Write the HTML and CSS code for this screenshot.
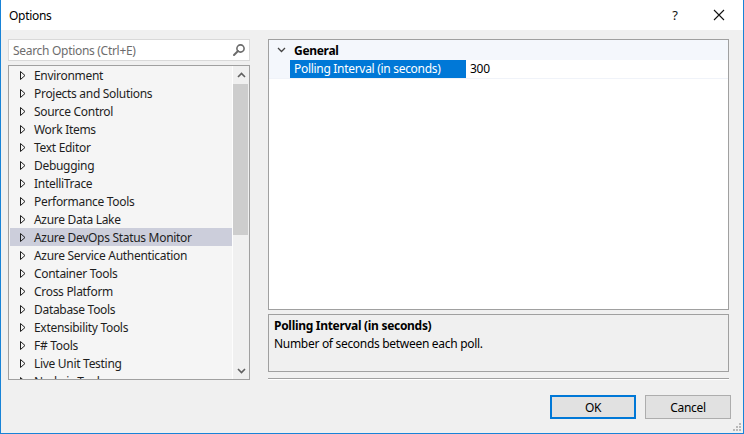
FILE: index.html
```html
<!DOCTYPE html>
<html>
<head>
<meta charset="utf-8">
<link rel="stylesheet" href="styles.css">
</head>
<body>
<div class="window">
  <div class="titlebar">
    <span class="title">Options</span>
    <span class="tb-help">?</span>
    <span class="tb-close">
      <svg width="12" height="12" viewBox="0 0 12 12"><path d="M1 1 L11 11 M11 1 L1 11" stroke="#111" stroke-width="1.1" fill="none"/></svg>
    </span>
  </div>
  <div class="content">
    <div class="panes">
      <div class="left">
        <div class="search">
          <span class="placeholder">Search Options (Ctrl+E)</span>
          <svg class="search-icon" width="14" height="14" viewBox="0 0 14 14"><circle cx="8.5" cy="5.5" r="3.6" stroke="#6b6b6b" stroke-width="1.6" fill="none"/><path d="M6 8 L2 12" stroke="#6b6b6b" stroke-width="2" stroke-linecap="round"/></svg>
        </div>
        <div class="tree">
          <div class="items">
            <div class="item"><svg class="tri" width="6" height="9" viewBox="0 0 6 9"><path d="M0.5 0.5 L5 4.5 L0.5 8.5 Z" stroke="#1e1e1e" fill="none"/></svg><span>Environment</span></div>
            <div class="item"><svg class="tri" width="6" height="9" viewBox="0 0 6 9"><path d="M0.5 0.5 L5 4.5 L0.5 8.5 Z" stroke="#1e1e1e" fill="none"/></svg><span>Projects and Solutions</span></div>
            <div class="item"><svg class="tri" width="6" height="9" viewBox="0 0 6 9"><path d="M0.5 0.5 L5 4.5 L0.5 8.5 Z" stroke="#1e1e1e" fill="none"/></svg><span>Source Control</span></div>
            <div class="item"><svg class="tri" width="6" height="9" viewBox="0 0 6 9"><path d="M0.5 0.5 L5 4.5 L0.5 8.5 Z" stroke="#1e1e1e" fill="none"/></svg><span>Work Items</span></div>
            <div class="item"><svg class="tri" width="6" height="9" viewBox="0 0 6 9"><path d="M0.5 0.5 L5 4.5 L0.5 8.5 Z" stroke="#1e1e1e" fill="none"/></svg><span>Text Editor</span></div>
            <div class="item"><svg class="tri" width="6" height="9" viewBox="0 0 6 9"><path d="M0.5 0.5 L5 4.5 L0.5 8.5 Z" stroke="#1e1e1e" fill="none"/></svg><span>Debugging</span></div>
            <div class="item"><svg class="tri" width="6" height="9" viewBox="0 0 6 9"><path d="M0.5 0.5 L5 4.5 L0.5 8.5 Z" stroke="#1e1e1e" fill="none"/></svg><span>IntelliTrace</span></div>
            <div class="item"><svg class="tri" width="6" height="9" viewBox="0 0 6 9"><path d="M0.5 0.5 L5 4.5 L0.5 8.5 Z" stroke="#1e1e1e" fill="none"/></svg><span>Performance Tools</span></div>
            <div class="item"><svg class="tri" width="6" height="9" viewBox="0 0 6 9"><path d="M0.5 0.5 L5 4.5 L0.5 8.5 Z" stroke="#1e1e1e" fill="none"/></svg><span>Azure Data Lake</span></div>
            <div class="item selected"><svg class="tri" width="6" height="9" viewBox="0 0 6 9"><path d="M0.5 0.5 L5 4.5 L0.5 8.5 Z" stroke="#1e1e1e" fill="none"/></svg><span>Azure DevOps Status Monitor</span></div>
            <div class="item"><svg class="tri" width="6" height="9" viewBox="0 0 6 9"><path d="M0.5 0.5 L5 4.5 L0.5 8.5 Z" stroke="#1e1e1e" fill="none"/></svg><span>Azure Service Authentication</span></div>
            <div class="item"><svg class="tri" width="6" height="9" viewBox="0 0 6 9"><path d="M0.5 0.5 L5 4.5 L0.5 8.5 Z" stroke="#1e1e1e" fill="none"/></svg><span>Container Tools</span></div>
            <div class="item"><svg class="tri" width="6" height="9" viewBox="0 0 6 9"><path d="M0.5 0.5 L5 4.5 L0.5 8.5 Z" stroke="#1e1e1e" fill="none"/></svg><span>Cross Platform</span></div>
            <div class="item"><svg class="tri" width="6" height="9" viewBox="0 0 6 9"><path d="M0.5 0.5 L5 4.5 L0.5 8.5 Z" stroke="#1e1e1e" fill="none"/></svg><span>Database Tools</span></div>
            <div class="item"><svg class="tri" width="6" height="9" viewBox="0 0 6 9"><path d="M0.5 0.5 L5 4.5 L0.5 8.5 Z" stroke="#1e1e1e" fill="none"/></svg><span>Extensibility Tools</span></div>
            <div class="item"><svg class="tri" width="6" height="9" viewBox="0 0 6 9"><path d="M0.5 0.5 L5 4.5 L0.5 8.5 Z" stroke="#1e1e1e" fill="none"/></svg><span>F# Tools</span></div>
            <div class="item"><svg class="tri" width="6" height="9" viewBox="0 0 6 9"><path d="M0.5 0.5 L5 4.5 L0.5 8.5 Z" stroke="#1e1e1e" fill="none"/></svg><span>Live Unit Testing</span></div>
            <div class="item"><svg class="tri" width="6" height="9" viewBox="0 0 6 9"><path d="M0.5 0.5 L5 4.5 L0.5 8.5 Z" stroke="#1e1e1e" fill="none"/></svg><span>Node.js Tools</span></div>
          </div>
          <div class="scrollbar">
            <div class="sb-btn"><svg width="9" height="6" viewBox="0 0 9 6"><path d="M1 5 L4.5 1.5 L8 5" stroke="#606060" stroke-width="1.6" fill="none"/></svg></div>
            <div class="sb-track"><div class="sb-thumb"></div></div>
            <div class="sb-btn"><svg width="9" height="6" viewBox="0 0 9 6"><path d="M1 1 L4.5 4.5 L8 1" stroke="#606060" stroke-width="1.6" fill="none"/></svg></div>
          </div>
        </div>
      </div>
      <div class="right">
        <div class="grid">
          <div class="cat-row">
            <svg class="chev" width="9" height="6" viewBox="0 0 9 6"><path d="M1 1 L4.5 4.5 L8 1" stroke="#444" stroke-width="1.3" fill="none"/></svg>
            <span class="cat-name">General</span>
          </div>
          <div class="prop-row">
            <div class="gutter"></div>
            <div class="prop-label">Polling Interval (in seconds)</div>
            <div class="prop-value">300</div>
          </div>
        </div>
        <div class="desc">
          <div class="desc-title">Polling Interval (in seconds)</div>
          <div class="desc-text">Number of seconds between each poll.</div>
        </div>
        <div class="sep"></div>
      </div>
    </div>
    <div class="footer">
      <button class="btn primary">OK</button>
      <button class="btn">Cancel</button>
    </div>
    <svg class="grip" width="10" height="10" viewBox="0 0 10 10">
      <rect x="7" y="1" width="2" height="2" fill="#b8b8b8"/>
      <rect x="4" y="4" width="2" height="2" fill="#b8b8b8"/>
      <rect x="7" y="4" width="2" height="2" fill="#b8b8b8"/>
      <rect x="1" y="7" width="2" height="2" fill="#b8b8b8"/>
      <rect x="4" y="7" width="2" height="2" fill="#b8b8b8"/>
      <rect x="7" y="7" width="2" height="2" fill="#b8b8b8"/>
    </svg>
  </div>
</div>
</body>
</html>
```

FILE: styles.css
```css
* { box-sizing: border-box; }
html, body { margin: 0; padding: 0; }
body {
  font-family: "Noto Sans", "Liberation Sans", sans-serif;
  font-size: 12px;
  letter-spacing: -0.3px;
  color: #1e1e1e;
  background: #f0f0f0;
}
.window {
  width: 744px;
  height: 434px;
  border: 1px solid #1883d7;
  border-top: none;
  display: flex;
  flex-direction: column;
  overflow: hidden;
}
.titlebar {
  height: 30px;
  background: #fff;
  display: flex;
  align-items: center;
  padding-left: 8px;
  flex: none;
}
.title { flex: 1; font-size: 12px; color: #000; }
.tb-help { width: 20px; font-size: 13px; color: #111; margin-right: 28px; text-align: center; }
.tb-close { width: 12px; height: 12px; margin-right: 18px; display: flex; }
.content {
  flex: 1;
  background: #f0f0f0;
  display: flex;
  flex-direction: column;
  position: relative;
}
.panes {
  display: flex;
  padding: 9px 0 0 7px;
}
.left {
  width: 242px;
  display: flex;
  flex-direction: column;
  gap: 4px;
}
.search {
  height: 22px;
  background: #fff;
  border: 1px solid #d9d9d9;
  display: flex;
  align-items: center;
  padding-left: 4px;
  padding-right: 3px;
}
.placeholder { flex: 1; color: #6d6d6d; }
.search-icon { flex: none; }
.tree {
  height: 315px;
  border: 1px solid #a0a0a0;
  background: #f5f5f5;
  display: flex;
  overflow: hidden;
}
.items {
  flex: 1;
  overflow: hidden;
  padding-left: 1px;
}
.item {
  height: 18px;
  display: flex;
  align-items: center;
  white-space: nowrap;
}
.item .tri { margin-left: 10px; margin-right: 8px; flex: none; }
.item.selected { background: #cccedb; }
.scrollbar {
  width: 17px;
  flex: none;
  display: flex;
  flex-direction: column;
  background: #f0f0f0;
  border-left: 1px solid #fdfdfd;
}
.sb-btn {
  height: 17px;
  display: flex;
  align-items: center;
  justify-content: center;
  flex: none;
}
.sb-track { flex: 1; padding: 1px 1px 0 0; }
.sb-thumb { height: 151px; background: #cdcdcd; }
.right {
  width: 461px;
  margin-left: 18px;
  display: flex;
  flex-direction: column;
}
.grid {
  height: 271px;
  border: 1px solid #a0a0a0;
  background: #fff;
}
.cat-row {
  height: 20px;
  background: #f4f7fc;
  display: flex;
  align-items: center;
}
.chev { margin-left: 8px; margin-right: 8px; }
.cat-name { font-weight: bold; color: #000; }
.prop-row {
  height: 19px;
  display: flex;
  border-bottom: 1px solid #f0f3f9;
}
.gutter { width: 21px; background: #f4f7fc; }
.prop-label {
  width: 176px;
  background: #0078d7;
  color: #fff;
  padding-left: 4px;
  line-height: 18px;
  white-space: nowrap;
}
.prop-value { padding-left: 4px; line-height: 18px; color: #000; }
.desc {
  margin-top: 4px;
  height: 58px;
  border: 1px solid #a0a0a0;
  background: #f0f0f0;
  padding: 3px 5px;
  color: #000;
}
.desc-title { font-weight: bold; line-height: 16px; }
.desc-text { line-height: 19px; }
.sep {
  margin-top: 6px;
  height: 2px;
  border-top: 1px solid #a0a0a0;
  border-bottom: 1px solid #fff;
}
.footer {
  display: flex;
  justify-content: flex-end;
  gap: 9px;
  padding: 15px 12px 0 0;
}
.btn {
  width: 86px;
  height: 24px;
  background: #e1e1e1;
  border: 1px solid #adadad;
  font-family: "Noto Sans", "Liberation Sans", sans-serif;
  font-size: 12px;
  letter-spacing: -0.3px;
  color: #000;
  padding: 0;
}
.btn.primary { border: 2px solid #0078d7; }
.grip { position: absolute; right: 1px; bottom: 1px; }
```
